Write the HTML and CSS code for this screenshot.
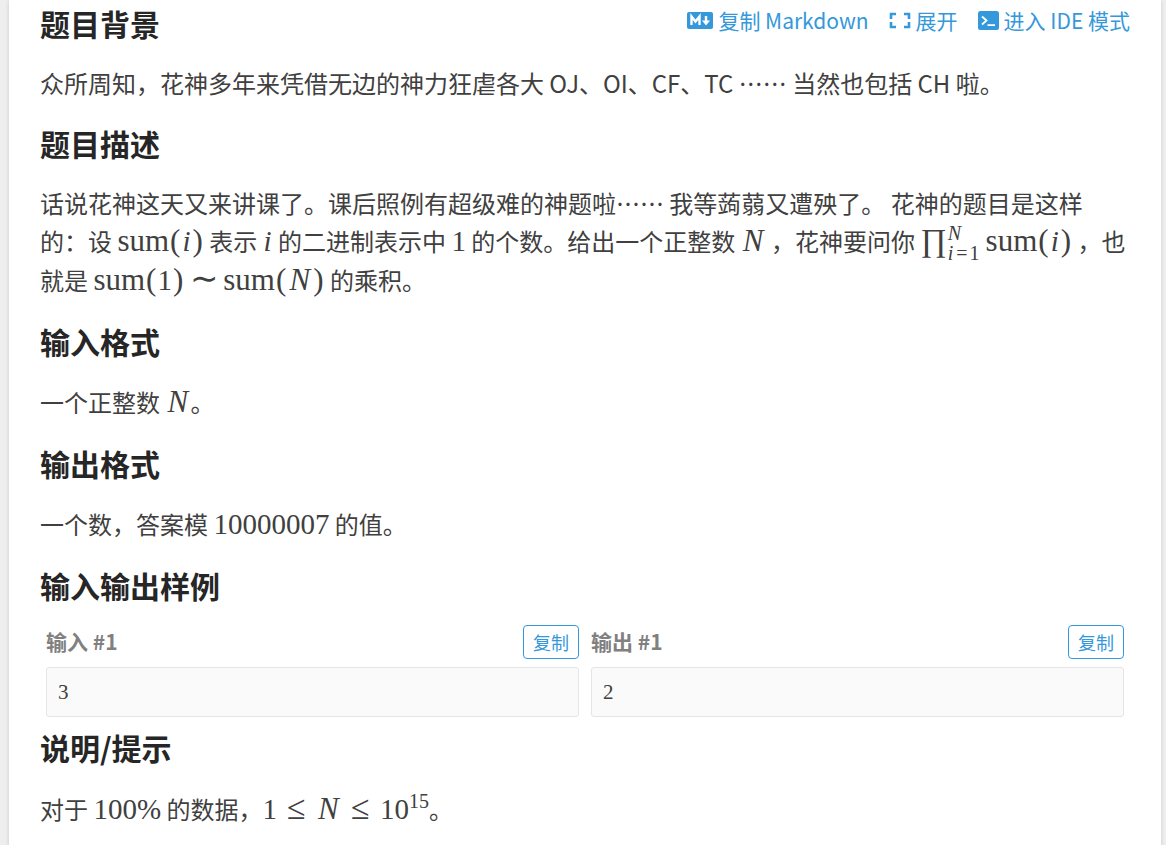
FILE: index.html
```html
<!DOCTYPE html>
<html lang="zh-CN">
<head>
  <meta charset="UTF-8" />
  <meta name="viewport" content="width=device-width, initial-scale=1.0" />
  <title>题目</title>
  <link rel="icon" href="data:,">
  <link rel="stylesheet" href="styles.css">
</head>
<body>
  <main class="card">
    <header class="card-header">
      <h2>题目背景</h2>
      <nav class="actions">
        <a href="#markdown">
          <svg width="26" height="17" viewBox="0 0 26 17" aria-hidden="true">
            <rect width="26" height="17" rx="2" fill="currentColor"/>
            <path d="M4.5 13V4.5L8.5 9.5L12.5 4.5V13" fill="none" stroke="#fff" stroke-width="2.4"/>
            <path d="M19 4V10" fill="none" stroke="#fff" stroke-width="2.4"/>
            <path d="M15 8.5H23L19 13.5Z" fill="#fff"/>
          </svg>复制 Markdown</a>
        <a href="#expand">
          <svg width="22" height="17" viewBox="0 0 22 17" aria-hidden="true">
            <path d="M7 2H2V7M2 10V15H7M15 2H20V7M20 10V15H15" fill="none" stroke="currentColor" stroke-width="2.6"/>
          </svg>展开</a>
        <a href="#ide">
          <svg width="21" height="19" viewBox="0 0 21 19" aria-hidden="true">
            <rect width="21" height="19" rx="2.5" fill="currentColor"/>
            <path d="M4 5.5L8.5 9.5L4 13.5M9.5 14.2H17" fill="none" stroke="#fff" stroke-width="1.8"/>
          </svg>进入 IDE 模式</a>
      </nav>
    </header>
    <p>众所周知，花神多年来凭借无边的神力狂虐各大 OJ、OI、CF、TC …… 当然也包括 CH 啦。</p>

    <h2>题目描述</h2>
    <p>话说花神这天又来讲课了。课后照例有超级难的神题啦…… 我等蒟蒻又遭殃了。 花神的题目是这样的：设 <span class="math"><span class="op">sum</span><span class="paren">(</span><i>i</i><span class="paren">)</span></span> 表示 <span class="math"><i>i</i></span> 的二进制表示中 <span class="math">1</span> 的个数。给出一个正整数 <span class="math"><i class="var">N</i></span> ，花神要问你 <span class="math"><span class="prod">∏</span><span class="limits"><i>N</i><span><i>i</i><span class="eq">=</span>1</span></span><span class="op">sum</span><span class="paren">(</span><i>i</i><span class="paren">)</span></span> ，也就是 <span class="math"><span class="op">sum</span><span class="paren">(</span>1<span class="paren">)</span><span class="rel">∼</span><span class="op">sum</span><span class="paren">(</span><i class="var">N</i><span class="paren">)</span></span> 的乘积。</p>

    <h2>输入格式</h2>
    <p>一个正整数 <span class="math"><i class="var">N</i></span>。</p>

    <h2>输出格式</h2>
    <p>一个数，答案模 <span class="math">10000007</span> 的值。</p>

    <h2>输入输出样例</h2>
    <div class="samples">
      <section class="sample">
        <div class="sample-head">
          <h3>输入 #1</h3>
          <button class="copy-btn" type="button">复制</button>
        </div>
        <pre>3</pre>
      </section>
      <section class="sample">
        <div class="sample-head">
          <h3>输出 #1</h3>
          <button class="copy-btn" type="button">复制</button>
        </div>
        <pre>2</pre>
      </section>
    </div>

    <h2>说明/提示</h2>
    <p>对于 <span class="math">100%</span> 的数据，<span class="math">1<span class="rel">≤</span><i class="var">N</i><span class="rel">≤</span>10<sup>15</sup></span>。</p>
  </main>
</body>
</html>
```

FILE: styles.css
```css
* {
  box-sizing: border-box;
}
body {
  margin: 0;
  padding: 0 5px 0 9px;
  background: #eee;
  color: #404040;
  font-family: "Noto Sans CJK SC", "Noto Sans", sans-serif;
  font-size: 24px;
  line-height: 36px;
}
.card {
  min-height: 100vh;
  padding: 5px 31px 16px;
  background: #fff;
  box-shadow: 0 1px 4px rgba(0, 0, 0, 0.15);
}
h2 {
  margin: 24px 0;
  color: #262626;
  font-size: 30px;
  line-height: 36px;
}
p {
  margin: 24px 0;
}
.card-header {
  display: flex;
  justify-content: space-between;
  align-items: flex-start;
}
.card-header h2 {
  margin: 0;
}
.actions {
  display: flex;
  gap: 20px;
}
.actions a {
  display: flex;
  align-items: center;
  gap: 5px;
  color: #3498db;
  font-size: 21px;
  line-height: 30px;
  text-decoration: none;
}

/* formulas */
.math {
  font-family: "Liberation Serif", serif;
  font-size: 29px;
  line-height: 38px;
  white-space: nowrap;
}
.math i {
  padding: 0 1px;
}
.op {
  font-size: 31px;
}
.paren {
  padding: 0 1px;
  font-size: 31px;
}
.math .var {
  display: inline-block;
  width: 25px;
  padding: 0;
  text-align: center;
  font-size: 31px;
}
.rel {
  display: inline-block;
  width: 39px;
  text-align: center;
  font-size: 34px;
}
.prod {
  font-size: 32px;
}
.limits {
  display: inline-flex;
  flex-direction: column;
  height: 20px;
  margin-right: 6px;
  font-size: 20px;
  line-height: 20px;
  vertical-align: super;
}
.eq {
  padding: 0 2px;
}
.math sup {
  font-size: 20px;
  line-height: 20px;
}

/* samples */
.samples {
  display: flex;
  gap: 12px;
  margin: -2px 6px 12px;
}
.sample {
  flex: 1;
}
.sample-head {
  display: flex;
  justify-content: space-between;
  align-items: flex-start;
}
.sample h3 {
  margin: 0;
  color: gray;
  font-size: 21px;
  line-height: 32px;
}
.copy-btn {
  padding: 3px 9px;
  border: 1px solid #3498db;
  border-radius: 4px;
  background: #fff;
  color: #3498db;
  font-family: inherit;
  font-size: 18px;
  line-height: 26px;
}
.sample pre {
  margin: 8px 0 0;
  padding: 9px 11px;
  border: 1px solid #e5e5e5;
  border-radius: 3px;
  background: #fafafa;
  font-family: "Liberation Serif", serif;
  font-size: 21px;
  line-height: 30px;
}
.samples + h2 {
  margin-top: 0;
}
```
